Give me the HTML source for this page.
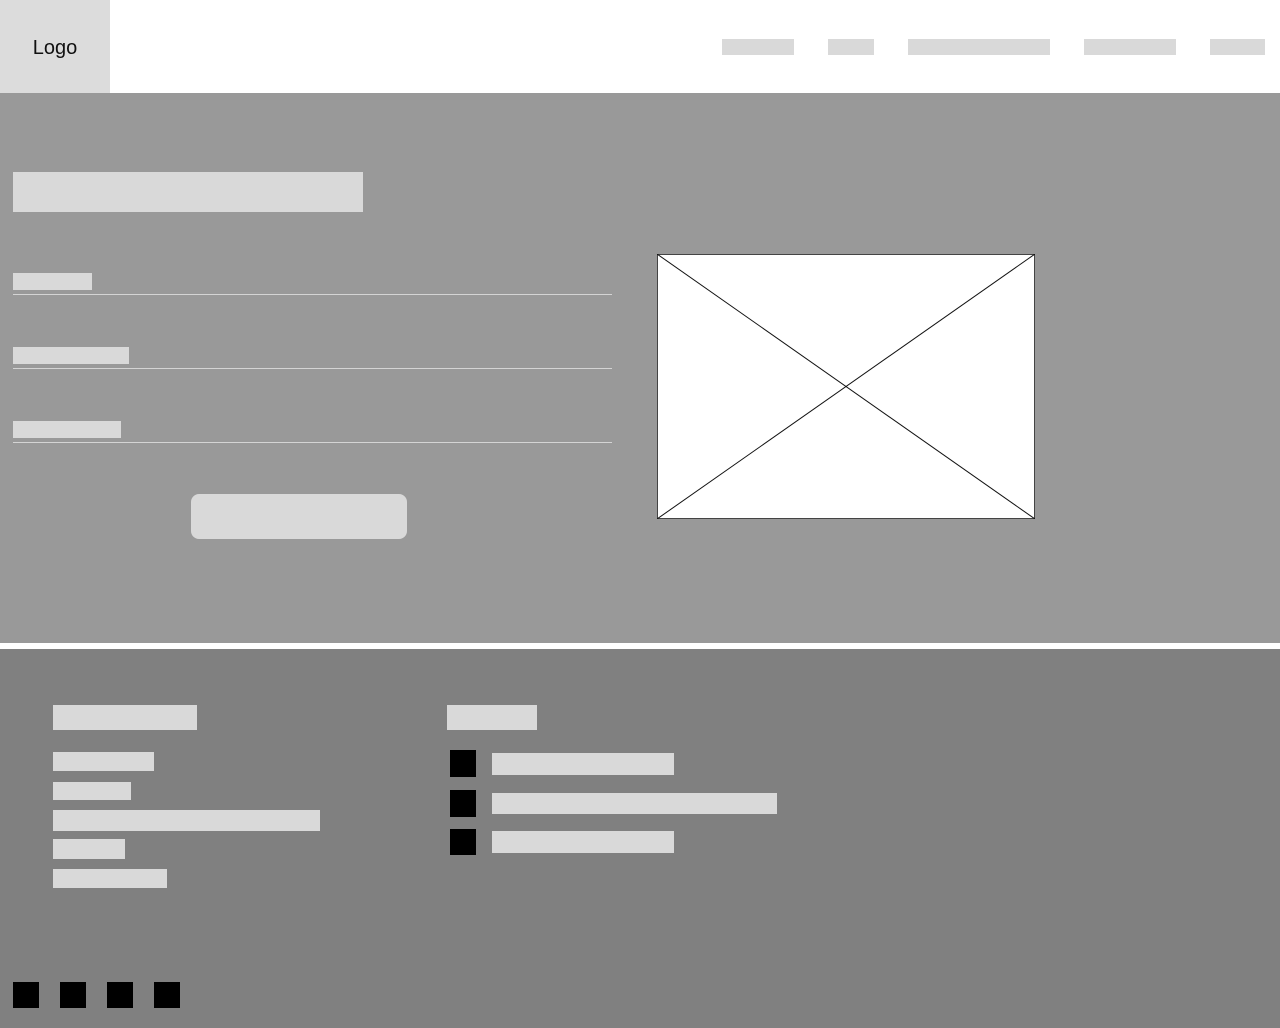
<!DOCTYPE html>
<html><head><meta charset="utf-8"><style>
*{margin:0;padding:0;box-sizing:border-box}
body{width:1280px;height:1028px;position:relative;background:#fff;font-family:"Liberation Sans",sans-serif;overflow:hidden}
div{position:absolute}
.b{background:#d9d9d9}
.k{background:#000}
.l{height:1px;background:#d4d4d4;left:13px;width:599px}
</style></head><body>
<div style="left:0;top:0;width:110px;height:93px;background:#dcdcdc;display:flex;align-items:center;justify-content:center;font-size:20px;color:#111;padding-top:3px">Logo</div>
<div class="b" style="left:722px;top:39px;width:72px;height:16px"></div>
<div class="b" style="left:828px;top:39px;width:46px;height:16px"></div>
<div class="b" style="left:908px;top:39px;width:142px;height:16px"></div>
<div class="b" style="left:1084px;top:39px;width:92px;height:16px"></div>
<div class="b" style="left:1210px;top:39px;width:55px;height:16px"></div>

<div style="left:0;top:93px;width:1280px;height:550px;background:#999"></div>
<div class="b" style="left:13px;top:172px;width:350px;height:40px"></div>
<div class="b" style="left:13px;top:273px;width:79px;height:17px"></div>
<div class="l" style="top:294px"></div>
<div class="b" style="left:13px;top:347px;width:116px;height:17px"></div>
<div class="l" style="top:368px"></div>
<div class="b" style="left:13px;top:421px;width:108px;height:17px"></div>
<div class="l" style="top:442px"></div>
<div class="b" style="left:191px;top:494px;width:216px;height:45px;border-radius:8px"></div>
<svg style="position:absolute;left:657px;top:254px" width="378" height="265"><rect x="0.5" y="0.5" width="377" height="264" fill="#fff" stroke="#444"/><line x1="0" y1="0" x2="378" y2="265" stroke="#111"/><line x1="378" y1="0" x2="0" y2="265" stroke="#111"/></svg>

<div style="left:0;top:649px;width:1280px;height:379px;background:#808080"></div>
<div class="b" style="left:53px;top:705px;width:144px;height:25px"></div>
<div class="b" style="left:53px;top:752px;width:101px;height:19px"></div>
<div class="b" style="left:53px;top:782px;width:78px;height:18px"></div>
<div class="b" style="left:53px;top:810px;width:267px;height:21px"></div>
<div class="b" style="left:53px;top:839px;width:72px;height:20px"></div>
<div class="b" style="left:53px;top:869px;width:114px;height:19px"></div>
<div class="b" style="left:447px;top:705px;width:90px;height:25px"></div>
<div class="k" style="left:450px;top:750px;width:26px;height:27px"></div>
<div class="b" style="left:492px;top:753px;width:182px;height:22px"></div>
<div class="k" style="left:450px;top:790px;width:26px;height:27px"></div>
<div class="b" style="left:492px;top:793px;width:285px;height:21px"></div>
<div class="k" style="left:450px;top:829px;width:26px;height:26px"></div>
<div class="b" style="left:492px;top:831px;width:182px;height:22px"></div>
<div class="k" style="left:13px;top:982px;width:26px;height:26px"></div>
<div class="k" style="left:60px;top:982px;width:26px;height:26px"></div>
<div class="k" style="left:107px;top:982px;width:26px;height:26px"></div>
<div class="k" style="left:154px;top:982px;width:26px;height:26px"></div>
</body></html>
